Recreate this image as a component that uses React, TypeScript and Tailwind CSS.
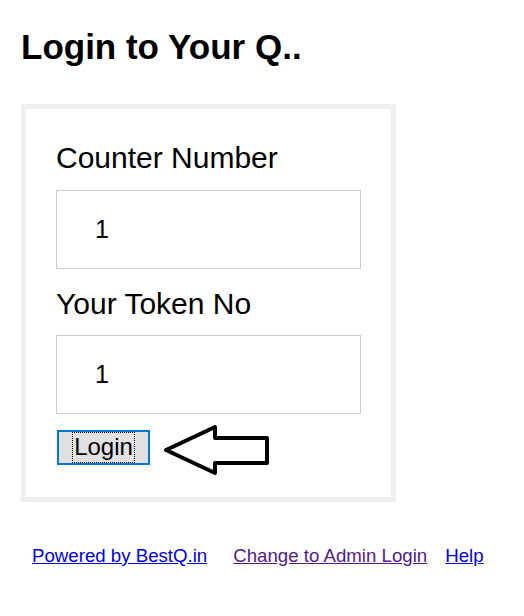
export default function App() {
  return (
    <div className="min-h-screen bg-white pl-[21px] pt-[27px] font-['Liberation_Sans',Arial,sans-serif] text-black">
      {/* heading */}
      <h1 className="text-[35px] font-bold leading-[40px]">Login to Your Q..</h1>

      {/* login card */}
      <div className="mt-[37px] w-[375px] border-[5px] border-[#efefef] px-[30px] pt-[32px] pb-[32px]">
        <label className="block text-[30px] leading-[34px]">Counter Number</label>
        <input
          defaultValue="1"
          className="mt-[15px] block h-[79px] w-[305px] border border-[#cccccc] pl-[38px] text-[25px] outline-none"
        />
        <label className="mt-[18px] block text-[30px] leading-[34px]">Your Token No</label>
        <input
          defaultValue="1"
          className="mt-[14px] block h-[79px] w-[305px] border border-[#cccccc] pl-[38px] text-[25px] outline-none"
        />
        <div className="mt-[16px] flex h-[35px] items-start">
          <button className="ml-px flex h-[35px] w-[93px] items-center justify-center border-2 border-[#0078d7] bg-[#e1e1e1] text-[24px] leading-none">
            <span className="border border-dotted border-black px-[1px] pt-[2px] pb-[3px]">Login</span>
          </button>
          <svg width="106" height="52" viewBox="0 0 106 52" className="ml-[13px] -mt-[6px] shrink-0">
            <polygon
              points="3,26 52,3 52,14 104,14 104,39 52,39 52,49"
              fill="white"
              stroke="black"
              strokeWidth="4"
              strokeLinejoin="round"
            />
          </svg>
        </div>
      </div>

      {/* footer links */}
      <div className="ml-[11px] mt-[43px] flex text-[18.67px] leading-[21px]">
        <a href="#" className="text-[#0000ee] underline">Powered by BestQ.in</a>
        <a href="#" className="ml-[26px] text-[#551a8b] underline">Change to Admin Login</a>
        <a href="#" className="ml-[18px] text-[#0000ee] underline">Help</a>
      </div>
    </div>
  );
}
